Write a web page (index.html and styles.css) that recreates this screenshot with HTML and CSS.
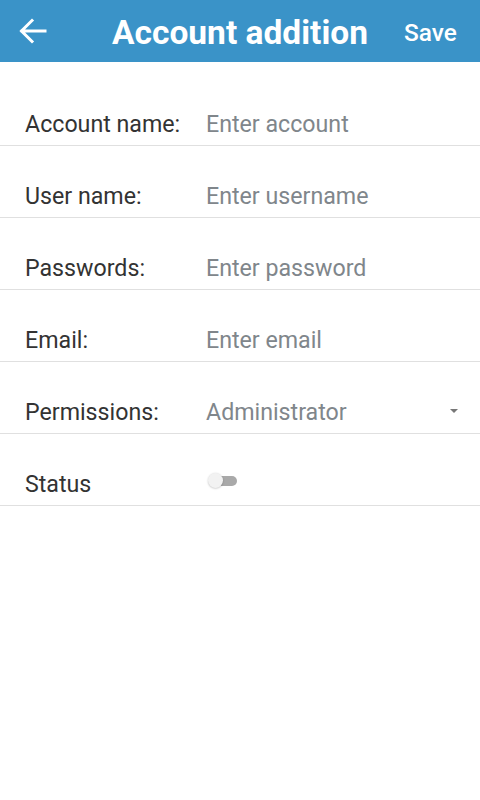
FILE: index.html
```html
<!DOCTYPE html>
<html>
<head>
<meta charset="utf-8">
<link rel="stylesheet" href="styles.css">
</head>
<body>
<header class="bar">
  <div class="side left">
    <button class="back" aria-label="Back">
      <svg width="28" height="26" viewBox="0 0 28 26"><path d="M26 13H3M13 2.5L2.5 13L13 23.5" fill="none" stroke="#fff" stroke-width="3" stroke-linecap="square"/></svg>
    </button>
  </div>
  <h1 class="title">Account addition</h1>
  <div class="side right"><span class="save">Save</span></div>
</header>
<main class="form">
  <div class="row"><span class="label">Account name:</span><span class="ph">Enter account</span></div>
  <div class="row"><span class="label">User name:</span><span class="ph">Enter username</span></div>
  <div class="row"><span class="label">Passwords:</span><span class="ph">Enter password</span></div>
  <div class="row"><span class="label">Email:</span><span class="ph">Enter email</span></div>
  <div class="row"><span class="label">Permissions:</span><span class="ph select">Administrator<span class="caret"></span></span></div>
  <div class="row"><span class="label">Status</span><span class="ph"><span class="switch"><span class="thumb"></span></span></span></div>
</main>
</body>
</html>
```
FILE: styles.css
```css
* { box-sizing: border-box; }
html, body { margin: 0; padding: 0; background: #fff; }
body { font-family: Roboto, "Noto Sans", sans-serif; width: 480px; }
.bar {
  height: 62px;
  background: #3a93c8;
  display: flex;
  align-items: center;
  color: #fff;
}
.side { width: 76px; flex: none; display: flex; align-items: center; }
.left { padding-left: 19px; }
.back {
  background: none; border: 0; padding: 0;
  width: 28px; height: 26px;
  display: flex;
}
.title {
  margin: 0;
  font-size: 33.5px;
  font-weight: 700;
  flex: 1;
  text-align: center;
  white-space: nowrap;
  padding-top: 2px;
}
.save {
  font-size: 24.4px;
  font-weight: 500;
  padding-top: 2px;
}
.form { padding-top: 12px; }
.row {
  height: 72px;
  border-bottom: 1px solid #e0e0e0;
  display: flex;
  align-items: center;
  padding-left: 25px;
  padding-top: 28px;
}
.label {
  width: 181px;
  font-size: 23.2px;
  color: #333;
}
.ph {
  flex: 1;
  font-size: 23.2px;
  color: #80868b;
  display: flex;
  align-items: center;
}
.select { padding-right: 22px; }
.caret {
  margin-left: auto;
  width: 0; height: 0;
  border-left: 4px solid transparent;
  border-right: 4px solid transparent;
  border-top: 4px solid #777;
  margin-top: -2px;
}
.switch {
  display: block;
  position: relative;
  width: 28px; height: 10px;
  border-radius: 5px;
  background: #a9a9a9;
  margin-left: 3px;
  margin-top: -6px;
}
.thumb {
  position: absolute;
  left: -1.5px; top: -2.5px;
  width: 15px; height: 15px;
  border-radius: 50%;
  background: #f2f2f2;
  box-shadow: 0 0.5px 2px rgba(0,0,0,0.25);
}
```
